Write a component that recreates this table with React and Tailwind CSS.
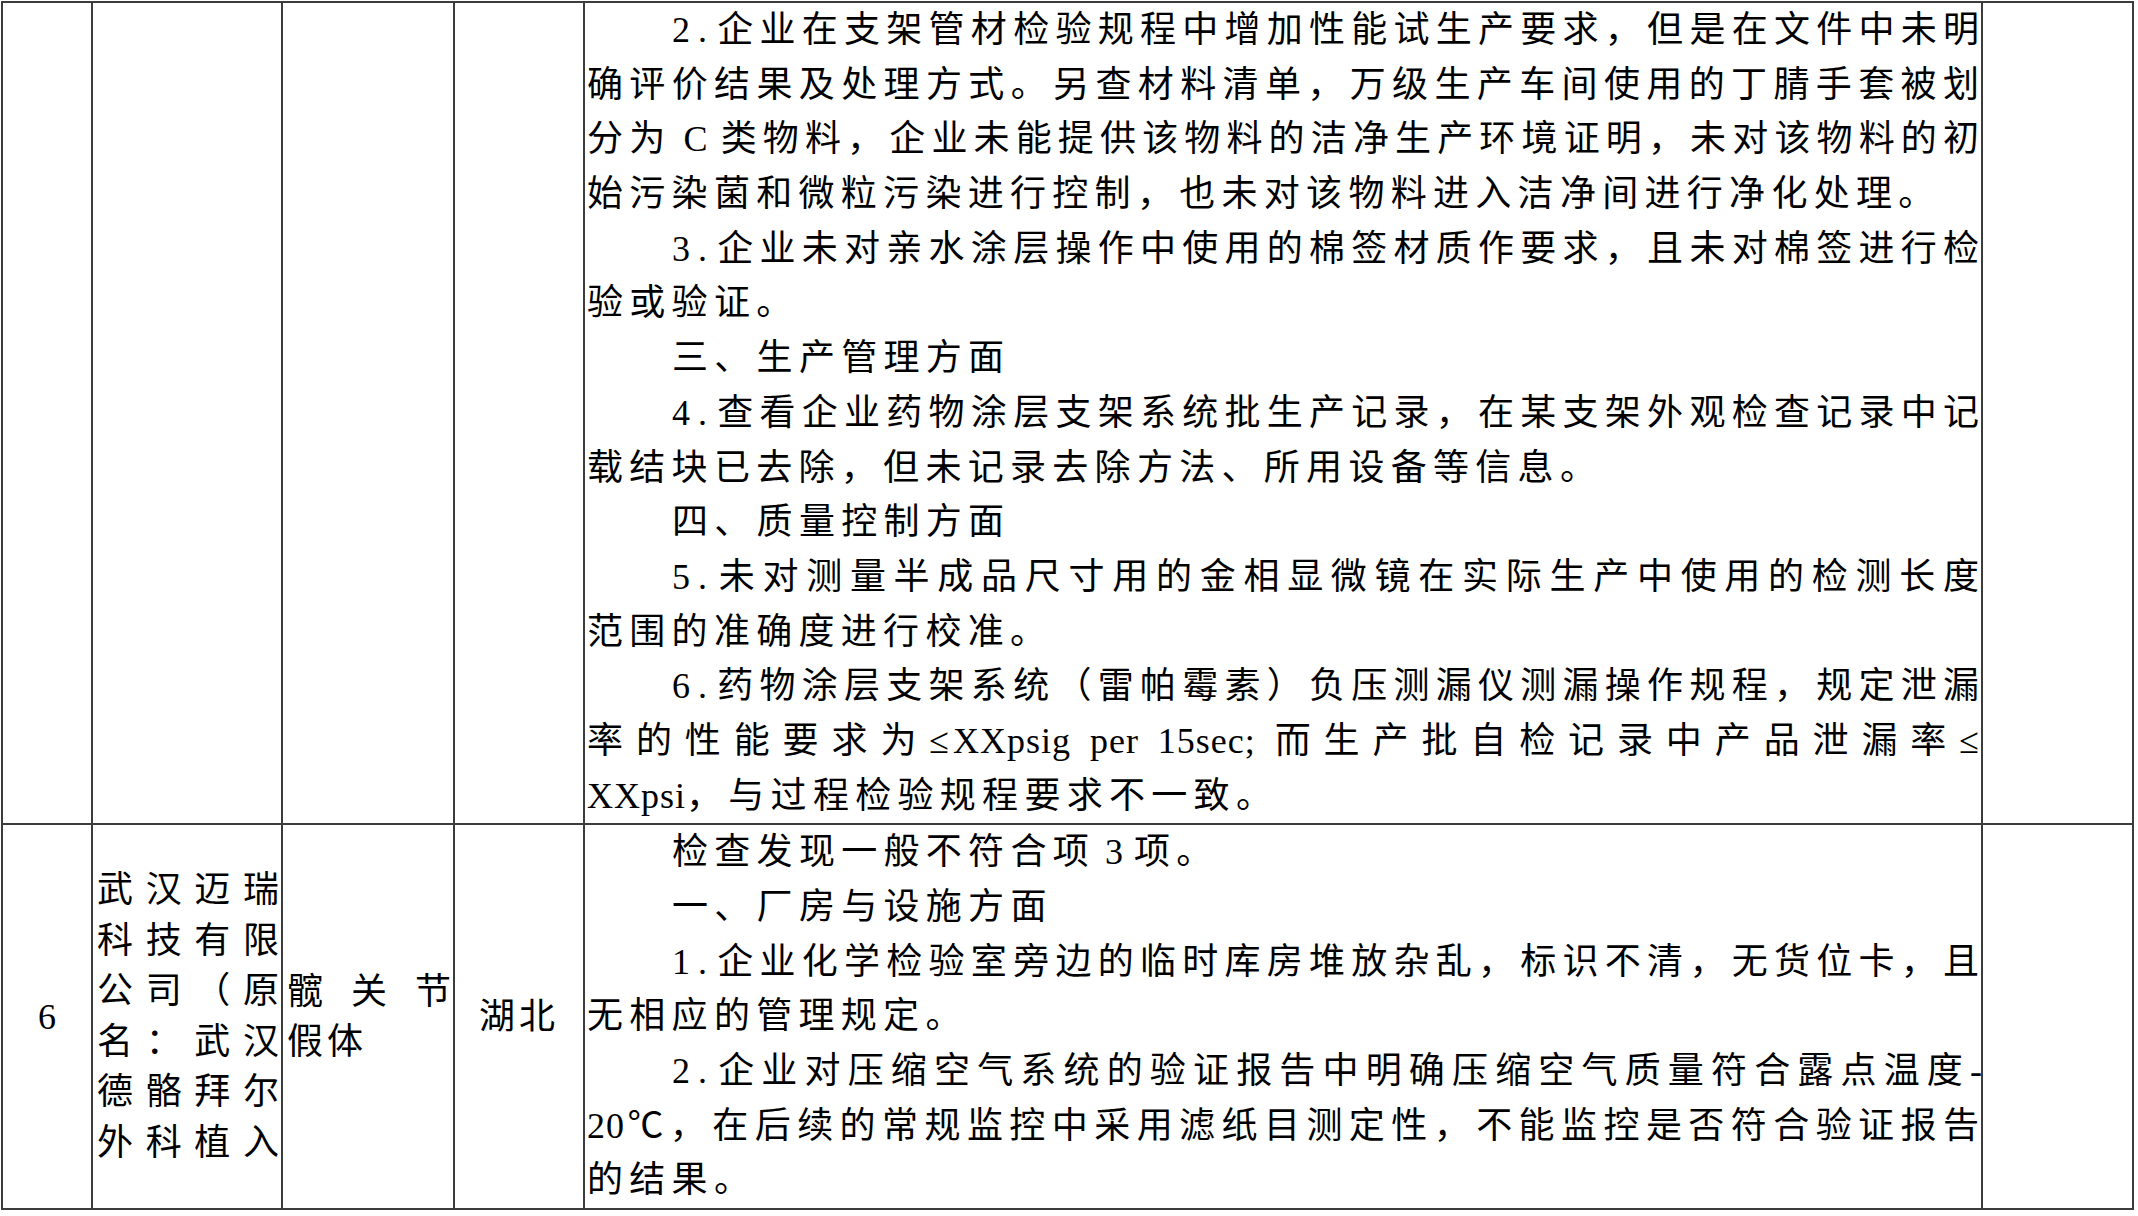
import clsx from 'clsx'

const ROW_ONE = [
  { t: '2.企业在支架管材检验规程中增加性能试生产要求，但是在文件中未明', indent: true, full: true },
  { t: '确评价结果及处理方式。另查材料清单，万级生产车间使用的丁腈手套被划', full: true },
  { t: '分为 C 类物料，企业未能提供该物料的洁净生产环境证明，未对该物料的初', full: true },
  { t: '始污染菌和微粒污染进行控制，也未对该物料进入洁净间进行净化处理。' },
  { t: '3.企业未对亲水涂层操作中使用的棉签材质作要求，且未对棉签进行检', indent: true, full: true },
  { t: '验或验证。' },
  { t: '三、生产管理方面', indent: true },
  { t: '4.查看企业药物涂层支架系统批生产记录，在某支架外观检查记录中记', indent: true, full: true },
  { t: '载结块已去除，但未记录去除方法、所用设备等信息。' },
  { t: '四、质量控制方面', indent: true },
  { t: '5.未对测量半成品尺寸用的金相显微镜在实际生产中使用的检测长度', indent: true, full: true },
  { t: '范围的准确度进行校准。' },
  { t: '6.药物涂层支架系统（雷帕霉素）负压测漏仪测漏操作规程，规定泄漏', indent: true, full: true },
  { t: '率的性能要求为≤XXpsig per 15sec; 而生产批自检记录中产品泄漏率≤', full: true },
  { t: 'XXpsi，与过程检验规程要求不一致。' }
]

const ROW_TWO = [
  { t: '检查发现一般不符合项 3 项。', indent: true },
  { t: '一、厂房与设施方面', indent: true },
  { t: '1.企业化学检验室旁边的临时库房堆放杂乱，标识不清，无货位卡，且', indent: true, full: true },
  { t: '无相应的管理规定。' },
  { t: '2.企业对压缩空气系统的验证报告中明确压缩空气质量符合露点温度-', indent: true, full: true },
  { t: '20℃，在后续的常规监控中采用滤纸目测定性，不能监控是否符合验证报告', full: true },
  { t: '的结果。' }
]

const COMPANY = ['武汉迈瑞', '科技有限', '公司（原', '名：武汉', '德骼拜尔', '外科植入']

function runs(text) {
  return text.split(/([\x20-\x7e]+)/).filter(Boolean).map((part, i) => {
    if (!/^[\x20-\x7e]+$/.test(part)) return <span key={i}>{part}</span>
    const numbering = /^\d+\.$/.test(part)
    return (
      <span key={i} className={numbering ? 'tracking-[8px]' : 'tracking-[1px]'}>
        {part}
      </span>
    )
  })
}

function Line({ t, indent, full }) {
  return (
    <div
      className={clsx(
        'h-[54.7px] leading-[54.7px]',
        indent && 'indent-[85px]',
        full ? 'text-justify [text-align-last:justify] tracking-[4px] -mr-[4px]' : 'tracking-[6.3px]'
      )}
    >
      {runs(t)}
    </div>
  )
}

const cell = 'border-r-2 border-b-2 border-[#3c3c3c]'

export default function App() {
  return (
    <div className="min-h-screen bg-white pl-[1px] pt-[1px] font-['Liberation_Serif','Noto_Sans_CJK_SC',serif] text-[36px] text-black">
      <div className="grid w-fit grid-cols-[90px_190px_172px_130px_1398px_151px] border-l-2 border-t-2 border-[#3c3c3c]">
        {/* previous item, continued from the page before */}
        <div className={cell} />
        <div className={cell} />
        <div className={cell} />
        <div className={cell} />
        <div className={clsx(cell, 'pl-[2px] pr-[2px]')}>
          {ROW_ONE.map((l, i) => (
            <Line key={i} {...l} />
          ))}
        </div>
        <div className={cell} />

        {/* item 6 */}
        <div className={clsx(cell, 'flex items-center justify-center')}>6</div>
        <div className={clsx(cell, 'flex flex-col justify-center pl-[4px] pr-[2px]')}>
          {COMPANY.map((c) => (
            <div key={c} className="h-[50.6px] leading-[50.6px] text-justify [text-align-last:justify]">
              {c}
            </div>
          ))}
        </div>
        <div className={clsx(cell, 'flex flex-col justify-center pl-[4px] pr-[2px]')}>
          <div className="h-[50px] leading-[50px] text-justify [text-align-last:justify]">髋关节</div>
          <div className="h-[50px] leading-[50px] tracking-[4px]">假体</div>
        </div>
        <div className={clsx(cell, 'flex items-center justify-center tracking-[4px]')}>湖北</div>
        <div className={clsx(cell, 'pl-[2px] pr-[2px]')}>
          {ROW_TWO.map((l, i) => (
            <Line key={i} {...l} />
          ))}
        </div>
        <div className={cell} />
      </div>
    </div>
  )
}
